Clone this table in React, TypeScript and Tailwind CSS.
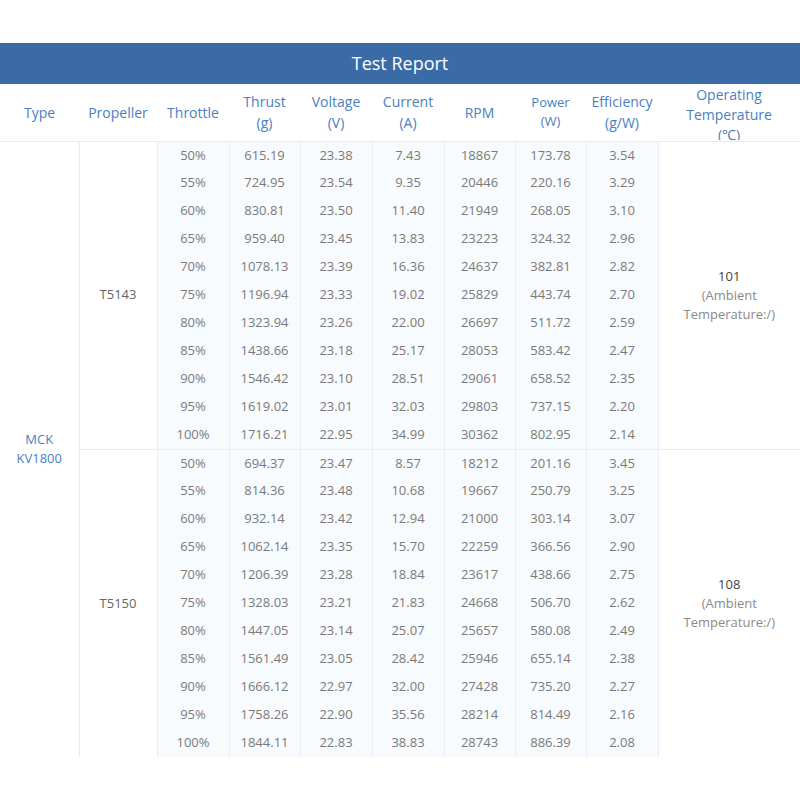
const groups = [
  {
    propeller: 'T5143',
    temp: '101',
    rows: [
      ['50%', '615.19', '23.38', '7.43', '18867', '173.78', '3.54'],
      ['55%', '724.95', '23.54', '9.35', '20446', '220.16', '3.29'],
      ['60%', '830.81', '23.50', '11.40', '21949', '268.05', '3.10'],
      ['65%', '959.40', '23.45', '13.83', '23223', '324.32', '2.96'],
      ['70%', '1078.13', '23.39', '16.36', '24637', '382.81', '2.82'],
      ['75%', '1196.94', '23.33', '19.02', '25829', '443.74', '2.70'],
      ['80%', '1323.94', '23.26', '22.00', '26697', '511.72', '2.59'],
      ['85%', '1438.66', '23.18', '25.17', '28053', '583.42', '2.47'],
      ['90%', '1546.42', '23.10', '28.51', '29061', '658.52', '2.35'],
      ['95%', '1619.02', '23.01', '32.03', '29803', '737.15', '2.20'],
      ['100%', '1716.21', '22.95', '34.99', '30362', '802.95', '2.14'],
    ],
  },
  {
    propeller: 'T5150',
    temp: '108',
    rows: [
      ['50%', '694.37', '23.47', '8.57', '18212', '201.16', '3.45'],
      ['55%', '814.36', '23.48', '10.68', '19667', '250.79', '3.25'],
      ['60%', '932.14', '23.42', '12.94', '21000', '303.14', '3.07'],
      ['65%', '1062.14', '23.35', '15.70', '22259', '366.56', '2.90'],
      ['70%', '1206.39', '23.28', '18.84', '23617', '438.66', '2.75'],
      ['75%', '1328.03', '23.21', '21.83', '24668', '506.70', '2.62'],
      ['80%', '1447.05', '23.14', '25.07', '25657', '580.08', '2.49'],
      ['85%', '1561.49', '23.05', '28.42', '25946', '655.14', '2.38'],
      ['90%', '1666.12', '22.97', '32.00', '27428', '735.20', '2.27'],
      ['95%', '1758.26', '22.90', '35.56', '28214', '814.49', '2.16'],
      ['100%', '1844.11', '22.83', '38.83', '28743', '886.39', '2.08'],
    ],
  },
];

const widths = [79, 78, 72, 71, 72, 72, 71, 71, 72, 142];

const headers: { lines: string[]; small?: boolean }[] = [
  { lines: ['Type'] },
  { lines: ['Propeller'] },
  { lines: ['Throttle'] },
  { lines: ['Thrust', '(g)'] },
  { lines: ['Voltage', '(V)'] },
  { lines: ['Current', '(A)'] },
  { lines: ['RPM'] },
  { lines: ['Power', '(W)'], small: true },
  { lines: ['Efficiency', '(g/W)'] },
];

export default function App() {
  const total = groups.reduce((n, g) => n + g.rows.length, 0);

  return (
    <div className="w-[800px] h-[800px] bg-white pt-[43px]" style={{ fontFamily: '"Open Sans", "Noto Sans", sans-serif' }}>
      <div className="h-[41px] bg-[#3a6ba7] text-white text-[18px] flex items-center justify-center">
        Test Report
      </div>
      <table className="w-[800px] table-fixed border-collapse">
        <colgroup>
          {widths.map((w, i) => (
            <col key={i} style={{ width: w }} />
          ))}
        </colgroup>
        <thead>
          <tr className="h-[57px] border-b border-[#e6edf4]">
            {headers.map((h, i) => (
              <th
                key={i}
                className={`p-0 font-normal text-[#4a80c2] text-center align-middle ${h.small ? 'text-[13px] leading-[19px]' : 'text-[14px] leading-[21px]'}`}
              >
                {h.lines.map((l) => (
                  <div key={l}>{l}</div>
                ))}
              </th>
            ))}
            <th className="p-0 font-normal text-[#4a80c2] text-[14px] leading-[20px] text-center align-top">
              <div className="h-[56px] overflow-hidden pt-[1px]">
                <div>Operating</div>
                <div>Temperature</div>
                <div>(℃)</div>
              </div>
            </th>
          </tr>
        </thead>
        <tbody className="text-[13px] text-[#7a7a7a]">
          {groups.map((g, gi) =>
            g.rows.map((r, ri) => (
              <tr
                key={`${gi}-${ri}`}
                className={`h-[28px] ${ri === g.rows.length - 1 && gi < groups.length - 1 ? 'border-b border-[#e6edf4]' : ''}`}
              >
                {gi === 0 && ri === 0 && (
                  <td rowSpan={total} className="p-0 text-center align-middle text-[#4a80c2] leading-[19px] border-r border-[#e6edf4]">
                    MCK
                    <br />
                    KV1800
                  </td>
                )}
                {ri === 0 && (
                  <td rowSpan={g.rows.length} className="p-0 text-center align-middle text-[#666] border-r border-[#e6edf4]">
                    {g.propeller}
                  </td>
                )}
                {r.map((v, ci) => (
                  <td key={ci} className="p-0 text-center align-middle bg-[#f8fbfd] border-r border-[#e6edf4]">
                    {v}
                  </td>
                ))}
                {ri === 0 && (
                  <td rowSpan={g.rows.length} className="p-0 text-center align-middle leading-[19px]">
                    <div className="text-[#444]">{g.temp}</div>
                    <div className="text-[#8a8a8a]">(Ambient</div>
                    <div className="text-[#8a8a8a]">Temperature:/)</div>
                  </td>
                )}
              </tr>
            ))
          )}
        </tbody>
      </table>
    </div>
  );
}
